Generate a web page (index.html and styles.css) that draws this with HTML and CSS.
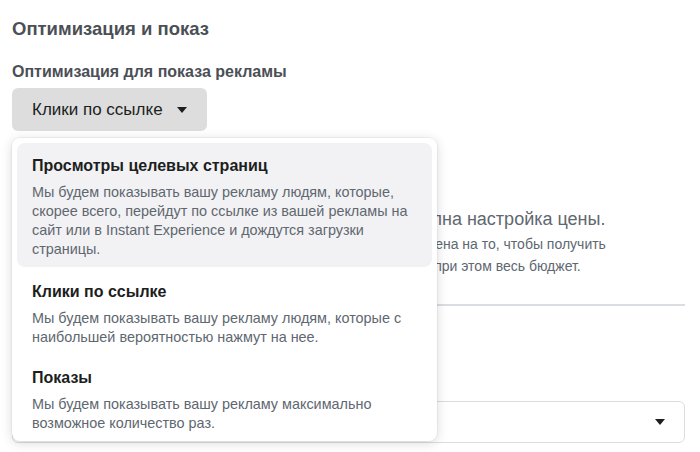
FILE: index.html
```html
<!DOCTYPE html>
<html lang="ru">
<head>
    <meta charset="UTF-8">
    <meta name="viewport" content="width=device-width, initial-scale=1.0">
    <title>Оптимизация и показ</title>
    <link rel="stylesheet" href="styles.css">
</head>
<body>
    <div class="section">
        <h2 class="section-title">Оптимизация и показ</h2>

        <div class="field">
            <div class="field-label">Оптимизация для показа рекламы</div>
            <div class="picker">
                <button class="picker-button">
                    Клики по ссылке
                    <span class="caret"></span>
                </button>

                <ul class="menu">
                    <li class="menu-item active">
                        <div class="menu-title">Просмотры целевых страниц</div>
                        <div class="menu-desc">Мы будем показывать вашу рекламу людям, которые, скорее всего, перейдут по ссылке из вашей рекламы на сайт или в Instant Experience и дождутся загрузки страницы.</div>
                    </li>
                    <li class="menu-item">
                        <div class="menu-title">Клики по ссылке</div>
                        <div class="menu-desc">Мы будем показывать вашу рекламу людям, которые с наибольшей вероятностью нажмут на нее.</div>
                    </li>
                    <li class="menu-item">
                        <div class="menu-title">Показы</div>
                        <div class="menu-desc">Мы будем показывать вашу рекламу максимально возможное количество раз.</div>
                    </li>
                </ul>
            </div>
        </div>

        <div class="bid-info">
            <div class="bid-title">В стратегии ставок «Наибольший объем» недоступна настройка цены.</div>
            <div class="bid-text">Система будет оптимизировать доставку рекламы и будет нацелена на то, чтобы получить<br>максимально возможное количество результатов, израсходовав при этом весь бюджет.</div>
        </div>

        <hr class="divider">

        <div class="field field-charge">
            <div class="field-label">Когда с вас будет взиматься плата</div>
            <div class="select-box">
                <span class="select-value">Показ</span>
                <span class="caret"></span>
            </div>
        </div>
    </div>
</body>
</html>
```

FILE: styles.css
```css
html, body {
    margin: 0;
    min-height: 100%;
}
body {
    font-family: "Liberation Sans", Arial, sans-serif;
    background: #fff;
    color: #1c1e21;
}
.section {
    box-sizing: border-box;
    min-height: 452px;
    padding: 17px 15px 8px 12px;
}
.section-title {
    margin: 0;
    font-size: 18.5px;
    line-height: 23px;
    font-weight: bold;
    color: #4b4f56;
}
.field {
    margin-top: 22px;
}
.field-label {
    font-size: 16px;
    line-height: 20px;
    font-weight: bold;
    color: #4b4f56;
}
.picker {
    position: relative;
    margin-top: 6px;
}
.picker-button {
    display: flex;
    align-items: center;
    gap: 14px;
    height: 43px;
    padding: 0 20px 0 20px;
    border: none;
    border-radius: 6px;
    background: #dddddd;
    font-family: inherit;
    font-size: 17px;
    color: #1c1e21;
}
.caret {
    width: 0;
    height: 0;
    border-left: 5.5px solid transparent;
    border-right: 5.5px solid transparent;
    border-top: 6px solid #1c1e21;
}
.menu {
    position: absolute;
    top: 50px;
    left: 0;
    z-index: 2;
    width: 415px;
    margin: 0;
    padding: 5px;
    list-style: none;
    background: #fff;
    border-radius: 8px;
    box-shadow: 0 2px 12px rgba(0, 0, 0, 0.15), 0 0 0 1px rgba(0, 0, 0, 0.04);
}
.menu-item {
    padding: 13px 14px 8px 15px;
    border-radius: 8px;
}
.menu-item + .menu-item {
    padding-top: 15px;
}
.menu-item:last-child {
    padding-top: 13px;
    padding-bottom: 3px;
}
.menu-item.active {
    background: #f2f2f4;
}
.menu-title {
    font-size: 16px;
    line-height: 20px;
    font-weight: bold;
    color: #1c1e21;
}
.menu-desc {
    margin-top: 7px;
    font-size: 14.4px;
    line-height: 19px;
    color: #606770;
}
.bid-info {
    margin-top: 77px;
}
.bid-title {
    font-size: 18px;
    line-height: 23px;
    color: #606770;
}
.bid-text {
    margin-top: 2px;
    font-size: 14px;
    line-height: 22px;
    color: #606770;
}
.divider {
    margin: 27px 0 0;
    border: none;
    height: 2px;
    background: #dadde1;
}
.field-charge {
    margin-top: 67px;
}
.select-box {
    display: flex;
    align-items: center;
    justify-content: space-between;
    height: 40px;
    margin-top: 8px;
    padding: 0 19px 0 16px;
    border: 1px solid #dadde1;
    border-radius: 6px;
    font-size: 16px;
    color: #1c1e21;
}
```
